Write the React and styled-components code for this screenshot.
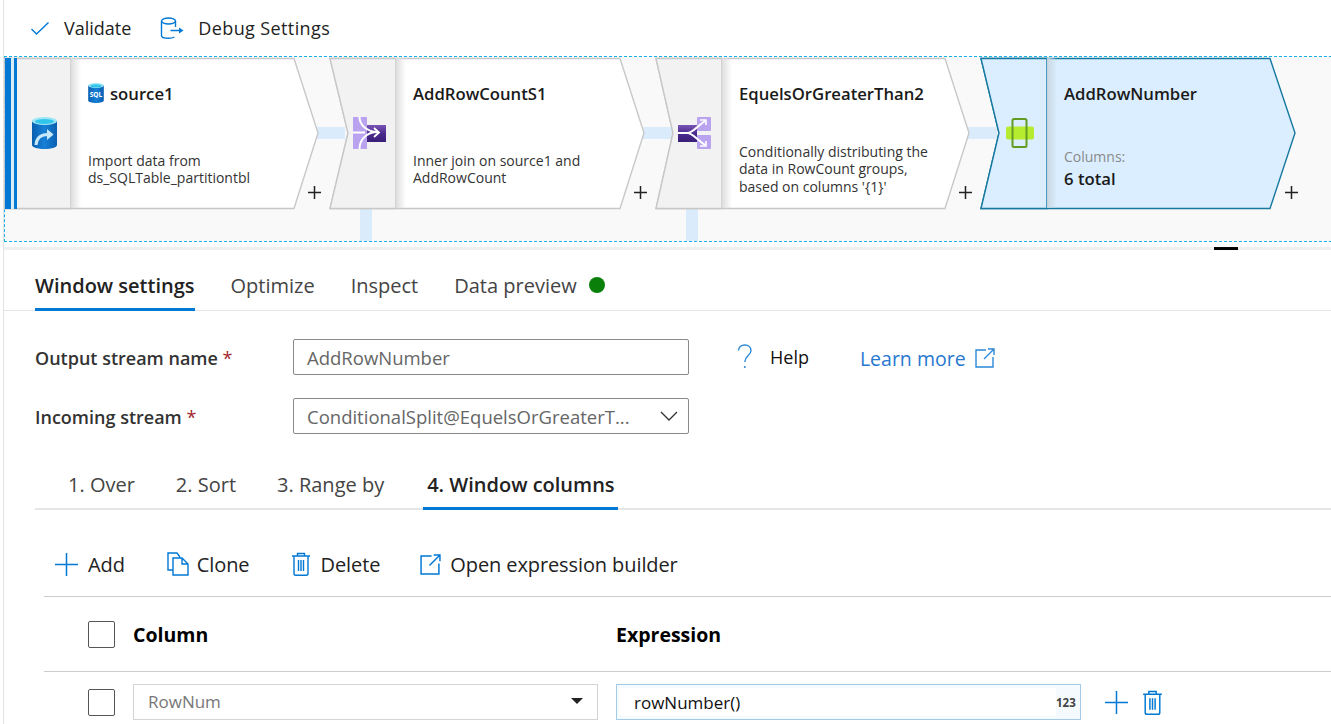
import React from "react";
import styled, { createGlobalStyle } from "styled-components";

const BLUE = "#0078d4";
const FONT = `"Open Sans", "Noto Sans", sans-serif`;

const GlobalStyle = createGlobalStyle`
  html, body { margin: 0; padding: 0; background: #fff; }
  body { font-family: ${FONT}; color: #222; overflow: hidden; }
`;

const Page = styled.div`
  width: 1328px;
  height: 724px;
  margin-left: 3px;
  border-left: 1px solid #e3e3e3;
  overflow: hidden;
`;

const Toolbar = styled.div`
  height: 56px;
  display: flex;
  align-items: center;
  padding-left: 27px;
  box-sizing: border-box;
`;
const ToolButton = styled.div`
  display: flex;
  align-items: center;
  gap: ${(p) => p.gap || 15}px;
  margin-right: ${(p) => p.mr || 0}px;
  font-size: 18px;
  letter-spacing: ${(p) => p.spacing || 0}px;
  color: #222;
`;

const Canvas = styled.div`
  position: relative;
  height: 184px;
  background: #f9f9f9;
  border-top: 1px dashed #16b1e6;
  border-bottom: 1px dashed #16b1e6;
  border-left: 1px dashed #16b1e6;
`;
const NodeBox = styled.div`
  position: absolute;
  left: ${(p) => p.x}px;
  top: 1px;
  width: ${(p) => p.w}px;
  height: 150px;
  display: flex;
  z-index: 1;
`;
const NodeShape = styled.svg`
  position: absolute;
  left: 0;
  top: 0;
  z-index: -1;
  overflow: visible;
`;
const Stripe = styled.div`
  position: absolute;
  left: 0;
  top: 0;
  width: 12px;
  height: 151px;
  background: linear-gradient(to right, ${BLUE} 6px, #d8ecfa 6px, #d8ecfa 9px, ${BLUE} 9px);
`;
const IconCell = styled.div`
  width: 54px;
  flex: none;
  padding-left: 12px;
  display: flex;
  align-items: center;
  justify-content: center;
`;
const NodeBody = styled.div`
  flex: 1;
  padding: 23px 0 0 17px;
  background: linear-gradient(to right, ${(p) => (p.$selected ? "#c9d6e0" : "#dedede")}, transparent 10px);
  display: flex;
  flex-direction: column;
`;
const NodeTitle = styled.div`
  display: flex;
  align-items: center;
  gap: 6px;
  height: 24px;
  font-size: 16.7px;
  font-weight: 600;
  color: #1a1a1a;
`;
const NodeText = styled.div`
  height: 56px;
  margin-top: 36px;
  display: flex;
  flex-direction: column;
  justify-content: center;
  font-size: 14px;
  line-height: 17.5px;
  color: #333;
`;
const ColumnsLabel = styled.div`
  margin-top: 2px;
  font-size: 14px;
  line-height: 18px;
  color: #8a8a8a;
`;
const ColumnsValue = styled.div`
  font-size: 16.7px;
  font-weight: 600;
  line-height: 26px;
  color: #1a1a1a;
`;
const PlusMark = styled.svg`
  position: absolute;
  left: ${(p) => p.x}px;
  top: 129px;
`;
const LinkH = styled.div`
  position: absolute;
  left: ${(p) => p.x}px;
  top: 70px;
  width: ${(p) => p.w}px;
  height: 12px;
  background: #daecfb;
`;
const LinkV = styled.div`
  position: absolute;
  left: ${(p) => p.x}px;
  top: 152px;
  width: 12px;
  height: 32px;
  background: #daecfb;
`;

const Splitter = styled.div`
  height: 3px;
  margin-top: 5px;
  background: #f0f0f0;
`;
const SplitHandle = styled.div`
  width: 24px;
  height: 3px;
  margin-left: 1210px;
  background: #000;
`;

const Tabs = styled.div`
  height: 61px;
  padding-left: 31px;
  display: flex;
  gap: 36px;
  border-bottom: 1px solid #e6e6e6;
  box-sizing: border-box;
`;
const Tab = styled.div`
  height: 61px;
  box-sizing: border-box;
  padding-top: 21px;
  font-size: 20px;
  line-height: 30px;
  font-weight: ${(p) => (p.$active ? 600 : 400)};
  color: ${(p) => (p.$active ? "#222" : "#444")};
  border-bottom: 3px solid ${(p) => (p.$active ? BLUE : "transparent")};
  display: flex;
  gap: 12px;
`;
const StatusDot = styled.span`
  width: 16px;
  height: 16px;
  margin-top: 6px;
  border-radius: 50%;
  background: #0a800a;
`;

const Form = styled.div`
  padding: 28px 0 0 31px;
  display: flex;
  flex-direction: column;
  gap: 23px;
`;
const FormRow = styled.div`
  display: flex;
  align-items: center;
  height: 36px;
`;
const Label = styled.div`
  width: 258px;
  padding-top: 2px;
  font-size: 18px;
  font-weight: 600;
  color: #333;
  & > em {
    font-style: normal;
    font-weight: 400;
    color: #a4262c;
  }
`;
const Field = styled.div`
  width: 396px;
  height: 36px;
  box-sizing: border-box;
  border: 1px solid #8a8a8a;
  border-radius: 2px;
  padding: 0 10px 0 13px;
  display: flex;
  align-items: center;
  justify-content: space-between;
  font-size: 18.5px;
  color: #666;
`;
const HelpLink = styled.div`
  margin-left: 48px;
  display: flex;
  align-items: center;
  gap: 17px;
  font-size: 18px;
  color: #111;
`;
const LearnMore = styled.div`
  margin-left: 51px;
  padding-top: 2px;
  display: flex;
  align-items: center;
  gap: 9px;
  font-size: 19.5px;
  color: #2878d0;
`;

const SubTabs = styled.div`
  margin: 33px 0 0 31px;
  height: 41px;
  padding-left: 33px;
  display: flex;
  gap: 41px;
  border-bottom: 2px solid #e6e6e6;
`;
const SubTab = styled.div`
  height: 43px;
  box-sizing: border-box;
  padding: 3px ${(p) => (p.$active ? 3 : 0)}px 0 ${(p) => (p.$active ? 4 : 0)}px;
  margin-left: ${(p) => (p.$active ? -2 : 0)}px;
  font-size: 20px;
  line-height: 30px;
  font-weight: ${(p) => (p.$active ? 600 : 400)};
  color: ${(p) => (p.$active ? "#222" : "#444")};
  border-bottom: 3px solid ${(p) => (p.$active ? BLUE : "transparent")};
`;

const ActionBar = styled.div`
  margin-left: 40px;
  height: 87px;
  padding: 22px 0 0 11px;
  box-sizing: border-box;
  display: flex;
  align-items: center;
  border-bottom: 1px solid #ccc;
`;
const ActionButton = styled.div`
  display: flex;
  align-items: center;
  gap: ${(p) => p.gap || 9}px;
  margin-right: ${(p) => p.mr || 0}px;
  font-size: 20px;
  letter-spacing: -0.1px;
  color: #222;
`;

const TableRow = styled.div`
  margin-left: 40px;
  display: grid;
  grid-template-columns: 45px 483px 465px auto;
  align-items: center;
  height: ${(p) => p.h}px;
  padding-left: 44px;
  box-sizing: border-box;
  border-bottom: ${(p) => (p.$line ? "1px solid #ccc" : "none")};
`;
const Check = styled.div`
  width: 27px;
  height: 27px;
  box-sizing: border-box;
  border: 1px solid #555;
  border-radius: 2px;
  background: #fff;
`;
const HeadCell = styled.div`
  font-size: 19.5px;
  font-weight: 700;
  color: #000;
`;
const ColumnSelect = styled.div`
  width: 465px;
  height: 36px;
  box-sizing: border-box;
  border: 1px solid #d4d4d4;
  padding: 0 14px 2px;
  display: flex;
  align-items: center;
  justify-content: space-between;
  font-size: 17px;
  color: #777;
`;
const Caret = styled.span`
  width: 0;
  height: 0;
  border-left: 6px solid transparent;
  border-right: 6px solid transparent;
  border-top: 6px solid #222;
`;
const ExprBox = styled.div`
  width: 465px;
  height: 36px;
  box-sizing: border-box;
  border: 1px solid #a3cbe8;
  background: #f5faff;
  display: flex;
  align-items: stretch;
`;
const ExprInput = styled.div`
  flex: 1;
  margin: 3px 0 3px 2px;
  padding-left: 15px;
  border-radius: 3px;
  background: #fff;
  display: flex;
  align-items: center;
  font-size: 17px;
  color: #111;
`;
const TypeTag = styled.div`
  width: 24px;
  display: flex;
  align-items: center;
  font-size: 11.5px;
  font-weight: 700;
  color: #444;
`;
const RowActions = styled.div`
  margin-left: 24px;
  display: flex;
  align-items: center;
  gap: 14px;
`;

const Check2 = () => (
  <svg width="18" height="13" viewBox="0 0 18 13" fill="none" stroke={BLUE} strokeWidth="1.4">
    <path d="M.5 7 5.500 12 17.500 .5" />
  </svg>
);
const DebugIcon = () => (
  <svg width="24" height="22" viewBox="0 0 24 22" fill="none" stroke={BLUE} strokeWidth="1.4">
    <ellipse cx="8.500" cy="4" rx="7" ry="3" />
    <path d="M1.500 4v14.500c0 1.600 3 2.800 7 2.800 2.600 0 4.600-.5 5.800-1.300M15.500 4v6M10.500 13.500H20" />
    <path d="M19 10.500l4.500 3-4.500 3z" fill={BLUE} stroke="none" />
  </svg>
);
const ExternalIcon = ({ size = 20, color = BLUE }) => (
  <svg width={size} height={size} viewBox="0 0 20 20" fill="none" stroke={color} strokeWidth="1.4">
    <path d="M11 2H1v17h17V9M9 11 19 1M13 1h6v6" />
  </svg>
);
const PlusIcon = ({ size = 23 }) => (
  <svg width={size} height={size} viewBox="0 0 23 23" fill="none" stroke={BLUE} strokeWidth="1.5">
    <path d="M11.500 0v23M0 11.500h23" />
  </svg>
);
const CloneIcon = () => (
  <svg width="22" height="24" viewBox="0 0 22 24" fill="none" stroke={BLUE} strokeWidth="1.4">
    <path d="M6 18H1V1h9l3 4M6 6h9l6 6v11H6zM15 6v6h6" />
  </svg>
);
const TrashIcon = ({ w = 20, h = 24 }) => (
  <svg width={w} height={h} viewBox="0 0 20 24" fill="none" stroke={BLUE} strokeWidth="1.4">
    <path d="M1 4h18M6.500 4V1.500h7V4M3 4v17.500c0 1 .8 1.800 1.800 1.800h10.400c1 0 1.800-.8 1.800-1.800V4M7.500 8v11M10 8v11M12.500 8v11" />
  </svg>
);
const HelpIcon = () => (
  <svg width="16" height="26" viewBox="0 0 16 26" fill="none" stroke="#2b88d8" strokeWidth="1.4">
    <path d="M1.500 6.500C1.500 3.200 4.200 1 7.800 1c3.500 0 6.200 2.200 6.200 5.500 0 5-6.200 5.200-6.200 11.500" />
    <circle cx="7.800" cy="23" r="1" fill="#2b88d8" stroke="none" />
  </svg>
);
const ChevronDown = () => (
  <svg width="18" height="10" viewBox="0 0 18 10" fill="none" stroke="#333" strokeWidth="1.3">
    <path d="M1 1l8 8 8-8" />
  </svg>
);

const Cylinder = ({ w, h, id, children }) => (
  <svg width={w} height={h} viewBox="0 0 25 32">
    <defs>
      <linearGradient id={id} x1="0" x2="1" y1="0" y2="0">
        <stop offset="0" stopColor="#0a5fb0" />
        <stop offset="0.5" stopColor="#1680d6" />
        <stop offset="1" stopColor="#0a5fb0" />
      </linearGradient>
    </defs>
    <path d="M0 4v24c0 2.400 5.600 4 12.500 4S25 30.400 25 28V4z" fill={`url(#${id})`} />
    <ellipse cx="12.500" cy="4" rx="12.500" ry="4" fill="#9fe6f5" />
    <ellipse cx="12.500" cy="4.500" rx="9.500" ry="2.600" fill="#32c5ec" />
    {children}
  </svg>
);
const SourceIcon = () => (
  <Cylinder w={25} h={32} id="cyl-big">
    <path d="M4 28c.5-7 5-10.500 12-10.500" fill="none" stroke="#c8e8fb" strokeWidth="3" />
    <path d="M15 12l6.500 5.500-6.500 5.500z" fill="#c8e8fb" />
  </Cylinder>
);
const SqlIcon = () => (
  <Cylinder w={16} h={20} id="cyl-small">
    <text x="12.500" y="22" fontSize="10.500" fontWeight="700" fill="#fff" textAnchor="middle" fontFamily="Open Sans, sans-serif">SQL</text>
  </Cylinder>
);
const JoinIcon = () => (
  <svg width="33" height="33" viewBox="0 0 33 33">
    <defs>
      <linearGradient id="join-dark" x1="0" x2="0" y1="0" y2="1">
        <stop offset="0" stopColor="#7a55b8" />
        <stop offset="0.5" stopColor="#4a2b8c" />
        <stop offset="1" stopColor="#3a1f78" />
      </linearGradient>
    </defs>
    <rect x="0" y="0" width="14" height="32" fill="#b9a2ee" />
    <rect x="14" y="8" width="19" height="17" fill="url(#join-dark)" />
    <path d="M6.500 0C6.500 8 14 15 25 15M6.500 32C6.500 23 13 15 25 15M0 15.500h12" fill="none" stroke="#fff" strokeWidth="2" />
    <path d="M21 11l5 4.500-5 4.500" fill="none" stroke="#fff" strokeWidth="1.800" />
  </svg>
);
const SplitIcon = () => (
  <svg width="34" height="33" viewBox="0 0 34 33">
    <defs>
      <linearGradient id="split-dark" x1="0" x2="0" y1="0" y2="1">
        <stop offset="0" stopColor="#7a55b8" />
        <stop offset="0.5" stopColor="#4a2b8c" />
        <stop offset="1" stopColor="#3a1f78" />
      </linearGradient>
    </defs>
    <rect x="19" y="0" width="14" height="14" rx="1" fill="#b9a2ee" />
    <rect x="19" y="18" width="14" height="14" rx="1" fill="#b9a2ee" />
    <rect x="0" y="8" width="19" height="17" fill="url(#split-dark)" />
    <path d="M0 16h9c6 0 9-6 18-12M9 16c6 0 9 6 18 12" fill="none" stroke="#fff" strokeWidth="2" />
    <path d="M22 3h6v5M22 29h6v-5" fill="none" stroke="#fff" strokeWidth="1.600" />
  </svg>
);
const WindowIcon = () => (
  <svg width="28" height="30" viewBox="0 0 28 30">
    <rect x="0" y="8.500" width="28" height="13" rx="2" fill="#b5ec2f" />
    <rect x="6.500" y="1" width="14" height="28" rx="1.500" fill="none" stroke="#629a22" strokeWidth="2" />
  </svg>
);

const Shape = ({ notch, right, tip, selected }) => {
  const stroke = selected ? "#17799f" : "#c8c8c8";
  const outline = `0,0.5 ${right},0.5 ${tip},75 ${right},150.5 0,150.5 ${notch},75`;
  const cell = `0,0.5 66,0.5 66,150.5 0,150.5 ${notch},75`;
  return (
    <NodeShape width={tip + 2} height="151">
      <polygon points={outline} fill={selected ? "#daeeff" : "#fff"} stroke={stroke} strokeWidth="1.4" />
      <polygon points={cell} fill={selected ? "#daeeff" : "#f2f2f2"} stroke={stroke} strokeWidth="1.4" />
    </NodeShape>
  );
};

const Plus = ({ x }) => (
  <PlusMark x={x} width="13" height="13" viewBox="0 0 13 13" stroke="#222" strokeWidth="1.500">
    <path d="M6.500 0v13M0 6.500h13" />
  </PlusMark>
);

const App = () => (
  <Page>
    <GlobalStyle />
    <Toolbar>
      <ToolButton mr={29} gap={15}>
        <Check2 />
        Validate
      </ToolButton>
      <ToolButton gap={14} spacing={0.38}>
        <DebugIcon />
        Debug Settings
      </ToolButton>
    </Toolbar>

    <Canvas>
      <LinkH x={312} w={28} />
      <LinkH x={636} w={32} />
      <LinkH x={962} w={30} />
      <LinkV x={355} />
      <LinkV x={681} />

      <NodeBox x={0} w={313}>
        <Shape notch={0} right={289} tip={313} />
        <Stripe />
        <IconCell>
          <SourceIcon />
        </IconCell>
        <NodeBody>
          <NodeTitle>
            <SqlIcon />
            source1
          </NodeTitle>
          <NodeText>
            <span>Import data from</span>
            <span>ds_SQLTable_partitiontbl</span>
          </NodeText>
        </NodeBody>
      </NodeBox>
      <Plus x={303} />

      <NodeBox x={325} w={314}>
        <Shape notch={18} right={290} tip={314} />
        <IconCell>
          <JoinIcon />
        </IconCell>
        <NodeBody>
          <NodeTitle>AddRowCountS1</NodeTitle>
          <NodeText>
            <span>Inner join on source1 and</span>
            <span>AddRowCount</span>
          </NodeText>
        </NodeBody>
      </NodeBox>
      <Plus x={629} />

      <NodeBox x={651} w={313}>
        <Shape notch={17} right={289} tip={313} />
        <IconCell>
          <SplitIcon />
        </IconCell>
        <NodeBody>
          <NodeTitle>EquelsOrGreaterThan2</NodeTitle>
          <NodeText>
            <span>Conditionally distributing the</span>
            <span>data in RowCount groups,</span>
            <span>based on columns '{"{1}"}'</span>
          </NodeText>
        </NodeBody>
      </NodeBox>
      <Plus x={954} />

      <NodeBox x={976} w={314}>
        <Shape notch={18} right={289} tip={314} selected />
        <IconCell>
          <WindowIcon />
        </IconCell>
        <NodeBody $selected>
          <NodeTitle>AddRowNumber</NodeTitle>
          <NodeText>
            <ColumnsLabel>Columns:</ColumnsLabel>
            <ColumnsValue>6 total</ColumnsValue>
          </NodeText>
        </NodeBody>
      </NodeBox>
      <Plus x={1280} />
    </Canvas>

    <Splitter>
      <SplitHandle />
    </Splitter>

    <Tabs>
      <Tab $active>Window settings</Tab>
      <Tab>Optimize</Tab>
      <Tab>Inspect</Tab>
      <Tab>
        Data preview
        <StatusDot />
      </Tab>
    </Tabs>

    <Form>
      <FormRow>
        <Label>
          Output stream name <em>*</em>
        </Label>
        <Field>AddRowNumber</Field>
        <HelpLink>
          <HelpIcon />
          Help
        </HelpLink>
        <LearnMore>
          Learn more
          <ExternalIcon color="#2b88d8" />
        </LearnMore>
      </FormRow>
      <FormRow>
        <Label>
          Incoming stream <em>*</em>
        </Label>
        <Field>
          ConditionalSplit@EquelsOrGreaterT...
          <ChevronDown />
        </Field>
      </FormRow>
    </Form>

    <SubTabs>
      <SubTab>1. Over</SubTab>
      <SubTab>2. Sort</SubTab>
      <SubTab>3. Range by</SubTab>
      <SubTab $active>4. Window columns</SubTab>
    </SubTabs>

    <ActionBar>
      <ActionButton mr={42} gap={10}>
        <PlusIcon />
        Add
      </ActionButton>
      <ActionButton mr={41} gap={8}>
        <CloneIcon />
        Clone
      </ActionButton>
      <ActionButton mr={40} gap={10}>
        <TrashIcon />
        Delete
      </ActionButton>
      <ActionButton>
        <ExternalIcon size={21} />
        Open expression builder
      </ActionButton>
    </ActionBar>

    <TableRow h={75} $line>
      <Check />
      <HeadCell>Column</HeadCell>
      <HeadCell>Expression</HeadCell>
    </TableRow>
    <TableRow h={60}>
      <Check />
      <ColumnSelect>
        RowNum
        <Caret />
      </ColumnSelect>
      <ExprBox>
        <ExprInput>rowNumber()</ExprInput>
        <TypeTag>123</TypeTag>
      </ExprBox>
      <RowActions>
        <PlusIcon />
        <TrashIcon w={21} h={25} />
      </RowActions>
    </TableRow>
  </Page>
);

export default App;
